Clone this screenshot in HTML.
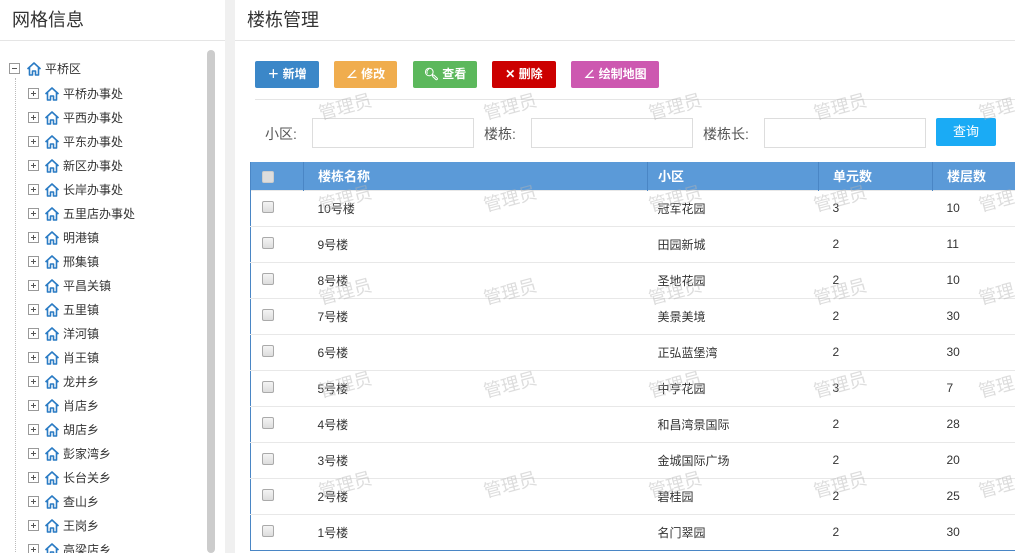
<!DOCTYPE html>
<html><head><meta charset="utf-8"><style>
*{margin:0;padding:0;box-sizing:border-box}
html,body{width:1015px;height:553px;overflow:hidden}
body{background:#f0f0f0;font-family:"Liberation Sans","Noto Sans CJK SC",sans-serif;font-size:12px;color:#333;position:relative}
.left{position:absolute;left:0;top:0;width:225px;height:553px;background:#fff}
.right{position:absolute;left:235px;top:0;width:780px;height:553px;background:#fff;overflow:hidden}
.ttl{height:41px;border-bottom:1px solid #e5e5e5;font-size:18px;line-height:40px;padding-left:12px;color:#333}
.sb{position:absolute;left:207px;top:50px;width:8px;height:503px;background:#ccc;border-radius:4px}
.node{position:absolute;height:18px;line-height:18px;font-size:12px;color:#333;white-space:nowrap}
.box{position:absolute;width:11px;height:11px;border:1px solid #999;background:#fff;top:3px}
.box:before{content:"";position:absolute;left:2px;top:4px;width:5px;height:1px;background:#555}
.box.p:after{content:"";position:absolute;left:4px;top:2px;width:1px;height:5px;background:#555}
.ico{position:absolute;top:1px}
.vl{position:absolute;left:15px;top:78px;height:480px;border-left:1px dotted #bbb}
.btn{position:absolute;top:61px;height:27px;border-radius:2px;color:#fff;line-height:27px;font-size:12px;text-align:center;font-weight:bold}
.sep{position:absolute;left:20px;top:99px;width:760px;border-top:1px solid #e5e5e5}
.lbl{position:absolute;top:124px;font-size:14px;color:#555}
.inp{position:absolute;top:118px;height:30px;border:1px solid #ddd}
table{position:absolute;left:15px;top:162px;border-collapse:collapse;border-left:1px solid #4a86c5;border-bottom:1px solid #4a86c5;width:780px}
th{background:#5b9ad8;color:#fff;height:28px;text-align:left;font-weight:bold;font-size:13px;border-left:1px solid #4a86c5;padding-left:14px}
td{height:36px;border-top:1px solid #e8e8e8;padding-left:14px;font-size:12px;color:#333}
.cb{display:inline-block;width:12px;height:12px;border:1px solid #aaa;border-radius:2px;background:linear-gradient(#f4f4f4,#ddd);vertical-align:middle;margin-left:-3px;margin-top:-4px}
th .cb{background:#ddd;border-color:#ccc}
.wm{position:absolute;color:rgba(180,180,180,.45);font-size:18px;transform:rotate(-15deg);pointer-events:none;white-space:nowrap}
</style></head><body>
<div class="left">
<div class="ttl">网格信息</div>
<div class="sb"></div>
<div class="vl"></div>
</div>
<div class="right">
<div class="ttl">楼栋管理</div>
<div class="btn" style="left:20px;width:64px;background:#3b87c8">＋ 新增</div>
<div class="btn" style="left:99px;width:63px;background:#f0ad4e">∠ 修改</div>
<div class="btn" style="left:178px;width:64px;background:#5cb85c">&#x1F50D;&#xFE0E; 查看</div>
<div class="btn" style="left:257px;width:64px;background:#cc0000">✕ 删除</div>
<div class="btn" style="left:336px;width:88px;background:#cd58b0">∠ 绘制地图</div>
<div class="sep"></div>
<div class="lbl" style="left:30px">小区:</div>
<div class="inp" style="left:77px;width:162px"></div>
<div class="lbl" style="left:249px">楼栋:</div>
<div class="inp" style="left:296px;width:162px"></div>
<div class="lbl" style="left:468px">楼栋长:</div>
<div class="inp" style="left:529px;width:162px"></div>
<div class="btn" style="left:701px;top:118px;width:60px;height:28px;line-height:28px;background:#1aabf5;font-size:13px;font-weight:normal">查询</div>
<table>
<tr><th style="width:53px"><span class="cb" style="margin-top:0"></span></th><th style="width:344px">楼栋名称</th><th style="width:171px;padding-left:10px">小区</th><th style="width:114px">单元数</th><th>楼层数</th></tr>
<tr><td><span class="cb"></span></td><td>10号楼</td><td style="padding-left:10px">冠军花园</td><td>3</td><td>10</td></tr>
<tr><td><span class="cb"></span></td><td>9号楼</td><td style="padding-left:10px">田园新城</td><td>2</td><td>11</td></tr>
<tr><td><span class="cb"></span></td><td>8号楼</td><td style="padding-left:10px">圣地花园</td><td>2</td><td>10</td></tr>
<tr><td><span class="cb"></span></td><td>7号楼</td><td style="padding-left:10px">美景美境</td><td>2</td><td>30</td></tr>
<tr><td><span class="cb"></span></td><td>6号楼</td><td style="padding-left:10px">正弘蓝堡湾</td><td>2</td><td>30</td></tr>
<tr><td><span class="cb"></span></td><td>5号楼</td><td style="padding-left:10px">中亨花园</td><td>3</td><td>7</td></tr>
<tr><td><span class="cb"></span></td><td>4号楼</td><td style="padding-left:10px">和昌湾景国际</td><td>2</td><td>28</td></tr>
<tr><td><span class="cb"></span></td><td>3号楼</td><td style="padding-left:10px">金城国际广场</td><td>2</td><td>20</td></tr>
<tr><td><span class="cb"></span></td><td>2号楼</td><td style="padding-left:10px">碧桂园</td><td>2</td><td>25</td></tr>
<tr><td><span class="cb"></span></td><td>1号楼</td><td style="padding-left:10px">名门翠园</td><td>2</td><td>30</td></tr>
</table>
</div>
<div id="tree"></div>
<script>
var t=document.getElementById('tree');
var house='<svg width="16" height="16" viewBox="0 0 16 16"><path d="M1.5 8 L8 2 L14.5 8 M3.5 6.5 V14 H6.5 V10 H9.5 V14 H12.5 V6.5" fill="none" stroke="#2a7bc4" stroke-width="1.6" stroke-linejoin="round"/></svg>';
var names=["平桥办事处","平西办事处","平东办事处","新区办事处","长岸办事处","五里店办事处","明港镇","邢集镇","平昌关镇","五里镇","洋河镇","肖王镇","龙井乡","肖店乡","胡店乡","彭家湾乡","长台关乡","查山乡","王岗乡","高梁店乡"];
var h='<div class="node" style="left:9px;top:60px"><span class="box" style="left:0"></span><span class="ico" style="left:17px">'+house+'</span><span style="position:absolute;left:17px;top:0;width:62px;height:19px;background:#fcecd0;border:1px solid #f5d9a6;z-index:-1"></span><span style="position:absolute;left:36px">平桥区</span></div>';
for(var i=0;i<names.length;i++){var y=85+i*24;
h+='<div class="node" style="left:28px;top:'+y+'px"><span class="box p" style="left:0"></span><span class="ico" style="left:16px">'+house+'</span><span style="position:absolute;left:35px">'+names[i]+'</span></div>';}
var ys=[105,197,290,383,483],xs=[318,483,648,813,978];
for(var a=0;a<ys.length;a++)for(var b=0;b<xs.length;b++)h+='<div class="wm" style="left:'+xs[b]+'px;top:'+(ys[a]-12)+'px">管理员</div>';
t.innerHTML=h;
</script>
</body></html>
